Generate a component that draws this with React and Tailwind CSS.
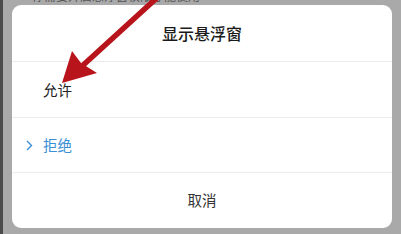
import React from 'react';

const font = { fontFamily: '"Noto Sans CJK SC", "Noto Sans", sans-serif' };

function Arrow() {
  return (
    <svg className="pointer-events-none absolute left-0 top-0" width="401" height="234" viewBox="0 0 401 234">
      <line x1="160" y1="-5" x2="80" y2="68" stroke="#b8141b" strokeWidth="5.5" strokeLinecap="round" />
      <polygon points="62,83 72,51 81,63 97,73" fill="#b8141b" />
    </svg>
  );
}

export default function App() {
  return (
    <div className="relative flex h-[234px] w-[401px] overflow-hidden bg-[#a9a9a9]" style={font}>
      <div className="h-full w-[3px] bg-[#4b4b4b]" />
      <span className="absolute left-[32px] top-[-13px] text-[12px] text-[#555]">你需要开启悬浮窗权限才能使用</span>
      <div className="ml-[9px] mt-[5px] flex h-[223px] w-[380px] flex-col rounded-[9px] bg-white">
        <div className="flex h-[56px] items-center justify-center text-[16px] font-medium text-[#1a1a1a]">显示悬浮窗</div>
        <div className="h-px bg-[#ececec]" />
        <div className="flex h-[55px] items-center pl-[31px] text-[14.5px] text-[#222]">允许</div>
        <div className="h-px bg-[#ececec]" />
        <div className="flex h-[54px] items-center pl-[14px] text-[14.5px] text-[#3b8fd5]">
          <svg width="7" height="11" viewBox="0 0 7 11" className="mr-[10px]">
            <path d="M1 1 L5.5 5.5 L1 10" fill="none" stroke="#3b8fd5" strokeWidth="1.4" />
          </svg>
          拒绝
        </div>
        <div className="h-px bg-[#ececec]" />
        <div className="flex flex-1 items-center justify-center pb-[2px] text-[14.5px] text-[#333]">取消</div>
      </div>
      <Arrow />
    </div>
  );
}
